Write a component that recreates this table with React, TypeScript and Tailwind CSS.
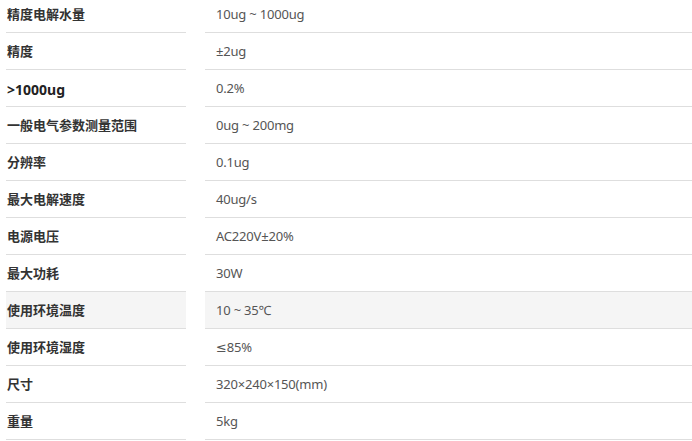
import React from "react";

const rows: { label: string; value: string; bold?: boolean; shaded?: boolean }[] = [
  { label: "精度电解水量", value: "10ug ~ 1000ug" },
  { label: "精度", value: "±2ug" },
  { label: ">1000ug", value: "0.2%", bold: true },
  { label: "一般电气参数测量范围", value: "0ug ~ 200mg" },
  { label: "分辨率", value: "0.1ug" },
  { label: "最大电解速度", value: "40ug/s" },
  { label: "电源电压", value: "AC220V±20%" },
  { label: "最大功耗", value: "30W" },
  { label: "使用环境温度", value: "10 ~ 35℃", shaded: true },
  { label: "使用环境湿度", value: "≤85%" },
  { label: "尺寸", value: "320×240×150(mm)" },
  { label: "重量", value: "5kg" },
];

export default function App() {
  return (
    <div
      className="w-[692px] h-[441px] overflow-hidden bg-white text-[13px]"
      style={{ fontFamily: '"Noto Sans", "DejaVu Sans", "Noto Sans CJK SC", sans-serif' }}
    >
      <div className="mt-[-4px] flex flex-col">
        {rows.map((r) => (
          <div key={r.label} className="flex h-[37px] gap-[19px] pl-[6px]">
            <div
              className={`w-[180px] flex items-center pt-[2px] pl-[1px] border-b border-[#dedede] ${
                r.bold ? "font-bold text-[14px] text-[#222]" : "font-semibold text-[#333]"
              } ${r.shaded ? "bg-[#f5f5f5]" : ""}`}
            >
              {r.label}
            </div>
            <div
              className={`flex-1 flex items-center pt-[2px] pl-[11px] border-b border-[#dedede] text-[#555] tracking-[-0.2px] ${
                r.shaded ? "bg-[#f5f5f5]" : ""
              }`}
            >
              {r.value}
            </div>
          </div>
        ))}
      </div>
    </div>
  );
}
